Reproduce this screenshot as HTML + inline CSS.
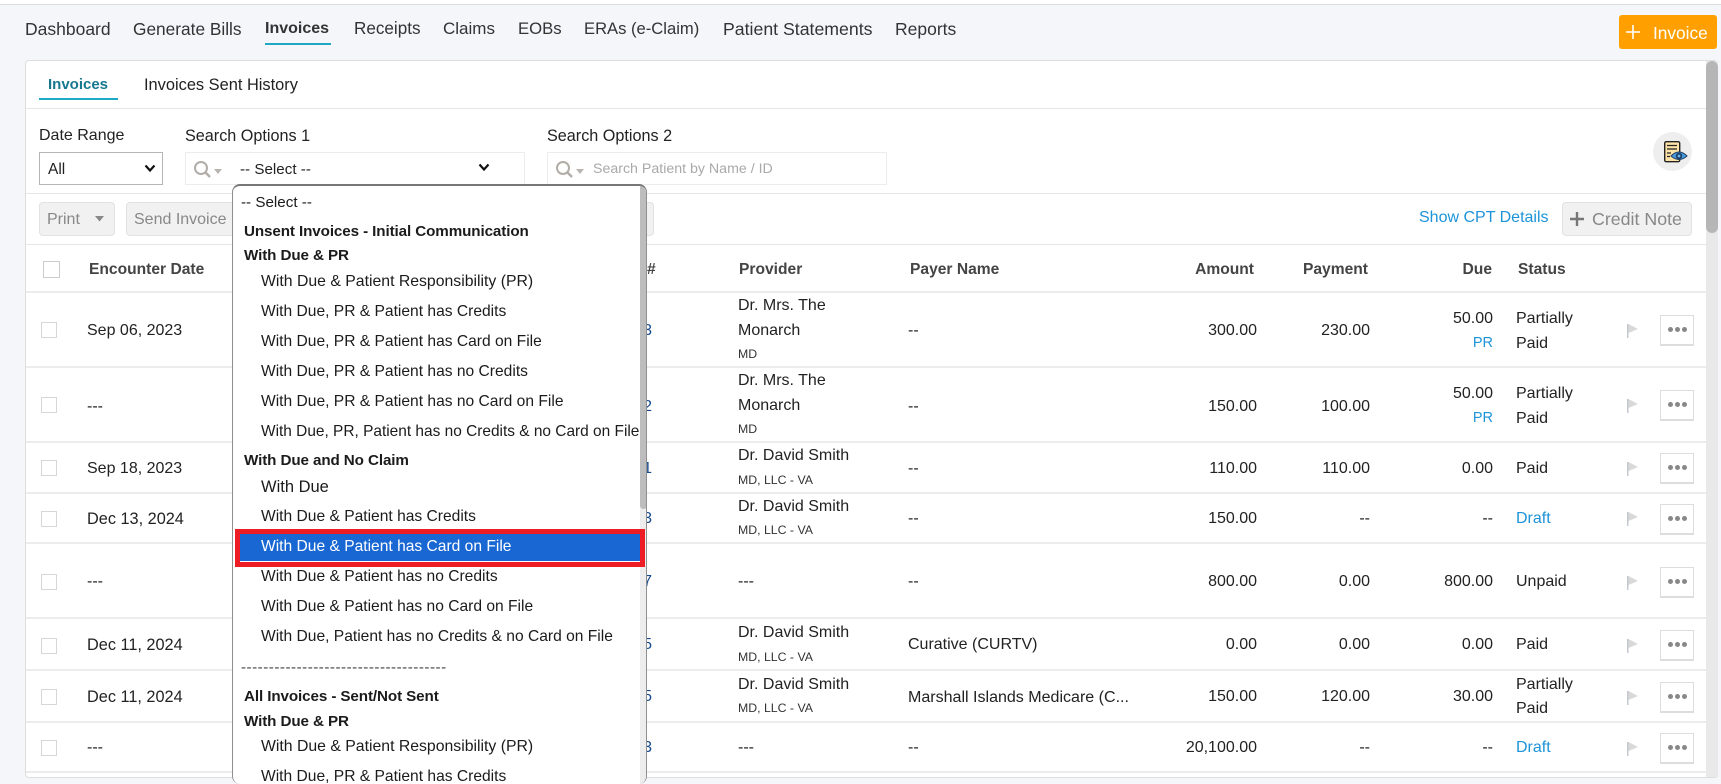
<!DOCTYPE html>
<html lang="en"><head><meta charset="utf-8"><title>Invoices</title>
<style>
html,body{margin:0;padding:0;width:1721px;height:784px;overflow:hidden}
body{position:relative;background:#f4f6fa;font-family:"Liberation Sans",sans-serif;font-size:16px;color:#222}
#p{position:absolute;left:0;top:0;width:1721px;height:784px;overflow:hidden}
.a,.t,.r{position:absolute}
.t,.r{white-space:nowrap;line-height:22px}
.l{position:absolute;left:26px;width:1680px;height:2px;background:#ececec}
.n{color:#333;top:18px}
.h{font-size:15.6px;font-weight:bold;color:#444;top:259px}
.c{position:absolute;left:41px;width:14px;height:14px;border:1px solid #d6d6d6;background:#fff}
.m{position:absolute;left:1660px;width:32px;height:28px;border:1px solid #ddd;border-bottom:2px solid #ddd;background:#fff}
.m:after{content:"";position:absolute;left:7px;top:11px;width:5px;height:5px;border-radius:50%;background:#888;box-shadow:7px 0 0 #888,14px 0 0 #888}
.f{position:absolute;left:1627px;width:11px;height:14px}
.s{font-size:12.3px;color:#333}
.q{font-size:16px}
.b{color:#1d93d8}
.d{position:absolute;left:232px;top:184px;width:415px;height:600px;background:#fff;border:1px solid #8f8f8f;border-top:2px solid #777;border-bottom:0;border-radius:8px;overflow:hidden;box-sizing:border-box}
.o{font-size:15.6px;left:28px;color:#1b1b1b}
.g{font-size:15.2px;font-weight:bold;left:11px;color:#1b1b1b;letter-spacing:-.1px}
.i{font-size:16px;color:#164a8c;right:1069px}
.btn{position:absolute;background:#f1f1f1;border:1px solid #e2e2e2;border-radius:4px;box-sizing:border-box}
</style></head><body>
<div id="p">
<div class="a" style="left:0;top:0;width:1721px;height:4px;background:#fff;border-bottom:1px solid #dcdcdc"></div>

<span class="t n" style="left:25px;font-size:17.5px">Dashboard</span>
<span class="t n" style="left:133px;font-size:17.3px">Generate Bills</span>
<span class="t n" style="left:265px;font-weight:bold;font-size:16px">Invoices</span>
<span class="t n" style="left:354px;font-size:17.1px">Receipts</span>
<span class="t n" style="left:443px;font-size:17px">Claims</span>
<span class="t n" style="left:518px;font-size:16.7px">EOBs</span>
<span class="t n" style="left:584px;font-size:16.6px">ERAs (e-Claim)</span>
<span class="t n" style="left:723px;font-size:17.7px">Patient Statements</span>
<span class="t n" style="left:895px;font-size:17.5px">Reports</span>
<div class="a" style="left:265px;top:43px;width:66px;height:2px;background:#1fa8c4"></div>

<div class="a" style="left:1619px;top:15px;width:98px;height:34px;background:#ff9f00;border-radius:3px"></div>
<svg class="a" style="left:1625px;top:24px" width="16" height="16"><path d="M8 1v14M1 8h14" stroke="#fff" stroke-width="1.6"/></svg>
<span class="t" style="left:1653px;top:22px;color:#fff;font-size:17.3px">Invoice</span>

<div class="a" style="left:25px;top:60px;width:1693px;height:718px;background:#fff;border:1px solid #dedede;border-radius:4px;box-sizing:border-box"></div>
<div class="a" style="left:1706px;top:61px;width:12px;height:716px;background:#e9e9e9"></div>
<div class="a" style="left:1706px;top:61px;width:12px;height:172px;background:#b6b6b6;border-radius:6px"></div>

<span class="t" style="left:48px;top:74px;color:#17788f;font-weight:bold;font-size:15px">Invoices</span>
<span class="t" style="left:144px;top:74px;font-size:16.4px;color:#222">Invoices Sent History</span>
<div class="a" style="left:39px;top:98px;width:79px;height:2px;background:#1fa8c4"></div>
<div class="a" style="left:26px;top:108px;width:1680px;height:1px;background:#e6e6e6"></div>

<span class="t" style="left:39px;top:125px;font-size:16px">Date Range</span>
<span class="t" style="left:185px;top:125px;font-size:16.2px">Search Options 1</span>
<span class="t" style="left:547px;top:125px;font-size:16.2px">Search Options 2</span>

<div class="a" style="left:39px;top:152px;width:124px;height:33px;border:1px solid #b5b5b5;box-sizing:border-box;background:#fff"></div>
<span class="t" style="left:48px;top:159px;font-size:15.5px">All</span>
<svg class="a" style="left:144px;top:164px" width="12" height="9"><path d="M1.5 1.5L6 6.5l4.5-5" fill="none" stroke="#111" stroke-width="2.2"/></svg>

<div class="a" style="left:185px;top:152px;width:340px;height:33px;border:1px solid #ececec;box-sizing:border-box;background:#fff"></div>
<svg class="a" style="left:193px;top:160px" width="30" height="18"><circle cx="8" cy="8" r="6" fill="none" stroke="#b3ada8" stroke-width="2"/><path d="M12 12l5 5" stroke="#b3ada8" stroke-width="2.4"/><path d="M21 9h8l-4 5z" fill="#b8b4b0"/></svg>
<span class="t" style="left:240px;top:159px;font-size:15.2px">-- Select --</span>
<svg class="a" style="left:478px;top:163px" width="12" height="9"><path d="M1.5 1.5L6 6.5l4.5-5" fill="none" stroke="#111" stroke-width="2.2"/></svg>

<div class="a" style="left:547px;top:152px;width:340px;height:33px;border:1px solid #ececec;box-sizing:border-box;background:#fff"></div>
<svg class="a" style="left:555px;top:160px" width="30" height="18"><circle cx="8" cy="8" r="6" fill="none" stroke="#b3ada8" stroke-width="2"/><path d="M12 12l5 5" stroke="#b3ada8" stroke-width="2.4"/><path d="M21 9h8l-4 5z" fill="#b8b4b0"/></svg>
<span class="t" style="left:593px;top:158px;font-size:14.2px;color:#a9a9a9">Search Patient by Name / ID</span>

<div class="a" style="left:1653px;top:132px;width:39px;height:39px;border-radius:50%;background:#eeeeee"></div>
<svg class="a" style="left:1662px;top:140px" width="27" height="24"><rect x="2.700" y="1.700" width="15" height="20" rx="1.5" fill="#fde3a7" stroke="#222" stroke-width="1.4"/><path d="M5 5.500h10M5 9h10M5 13h4M5 16.500h3" stroke="#222" stroke-width="1.200"/><path d="M9 16q8-8 16 0q-8 7-16 0z" fill="#4a9be0" stroke="#1d3f66" stroke-width="1"/><circle cx="17" cy="16" r="3.200" fill="#1d3f66"/><circle cx="17" cy="16" r="1.400" fill="#6db6f0"/></svg>

<div class="a" style="left:26px;top:193px;width:1680px;height:1px;background:#e6e6e6"></div>
<div class="btn" style="left:39px;top:202px;width:76px;height:34px"></div>
<span class="t" style="left:47px;top:209px;font-size:16px;color:#888">Print</span>
<svg class="a" style="left:94px;top:216px" width="11" height="6"><path d="M1 0h9L5.500 5.500z" fill="#888"/></svg>
<div class="btn" style="left:126px;top:202px;width:528px;height:34px"></div>
<span class="t" style="left:134px;top:209px;font-size:16px;color:#888">Send Invoice</span>
<span class="t b" style="left:1419px;top:207px;font-size:16px">Show CPT Details</span>
<div class="btn" style="left:1562px;top:202px;width:130px;height:34px"></div>
<svg class="a" style="left:1570px;top:212px" width="14" height="14"><path d="M7 0v14M0 7h14" stroke="#777" stroke-width="2.4"/></svg>
<span class="t" style="left:1592px;top:208px;font-size:17.8px;color:#888">Credit Note</span>
<div class="a" style="left:26px;top:244px;width:1680px;height:1px;background:#e6e6e6"></div>

<div class="a" style="left:43px;top:261px;width:15px;height:15px;border:1px solid #ccc"></div>
<span class="t h" style="left:89px">Encounter Date</span>
<span class="t h" style="left:647px">#</span>
<span class="t h" style="left:739px">Provider</span>
<span class="t h" style="left:910px">Payer Name</span>
<span class="r h" style="right:467px">Amount</span>
<span class="r h" style="right:353px">Payment</span>
<span class="r h" style="right:229px">Due</span>
<span class="t h" style="left:1518px">Status</span>

<div class="l" style="top:291px"></div><div class="l" style="top:366px"></div><div class="l" style="top:441px"></div><div class="l" style="top:492px"></div><div class="l" style="top:542px"></div><div class="l" style="top:617px"></div><div class="l" style="top:669px"></div><div class="l" style="top:721px"></div><div class="l" style="top:771px"></div>

<!-- row 1 -->
<div class="c" style="top:322px"></div><span class="t" style="left:87px;top:320px">Sep 06, 2023</span><span class="r i" style="top:320px">3</span>
<span class="t q" style="left:738px;top:295px">Dr. Mrs. The</span><span class="t q" style="left:738px;top:320px">Monarch</span><span class="t s" style="left:738px;top:343px">MD</span>
<span class="t" style="left:908px;top:320px">--</span><span class="r" style="right:464px;top:320px">300.00</span><span class="r" style="right:351px;top:320px">230.00</span><span class="r" style="right:228px;top:308px">50.00</span><span class="r b" style="right:228px;top:332px;font-size:14.5px">PR</span>
<span class="t" style="left:1516px;top:308px">Partially</span><span class="t" style="left:1516px;top:333px">Paid</span>
<svg class="f" style="top:324px"><path d="M.75 0v14" stroke="#c4c8cf" stroke-width="1.5"/><path d="M1.500 0L11 5 1.500 9z" fill="#d9d9d9"/></svg><div class="m" style="top:315px"></div>

<!-- row 2 -->
<div class="c" style="top:397px"></div><span class="t" style="left:87px;top:396px">---</span><span class="r i" style="top:396px">2</span>
<span class="t q" style="left:738px;top:370px">Dr. Mrs. The</span><span class="t q" style="left:738px;top:395px">Monarch</span><span class="t s" style="left:738px;top:418px">MD</span>
<span class="t" style="left:908px;top:396px">--</span><span class="r" style="right:464px;top:396px">150.00</span><span class="r" style="right:351px;top:396px">100.00</span><span class="r" style="right:228px;top:383px">50.00</span><span class="r b" style="right:228px;top:407px;font-size:14.5px">PR</span>
<span class="t" style="left:1516px;top:383px">Partially</span><span class="t" style="left:1516px;top:408px">Paid</span>
<svg class="f" style="top:399px"><path d="M.75 0v14" stroke="#c4c8cf" stroke-width="1.5"/><path d="M1.500 0L11 5 1.500 9z" fill="#d9d9d9"/></svg><div class="m" style="top:390px"></div>

<!-- row 3 -->
<div class="c" style="top:460px"></div><span class="t" style="left:87px;top:458px">Sep 18, 2023</span><span class="r i" style="top:458px">1</span>
<span class="t q" style="left:738px;top:445px">Dr. David Smith</span><span class="t s" style="left:738px;top:469px">MD, LLC - VA</span>
<span class="t" style="left:908px;top:458px">--</span><span class="r" style="right:464px;top:458px">110.00</span><span class="r" style="right:351px;top:458px">110.00</span><span class="r" style="right:228px;top:458px">0.00</span>
<span class="t" style="left:1516px;top:458px">Paid</span>
<svg class="f" style="top:462px"><path d="M.75 0v14" stroke="#c4c8cf" stroke-width="1.5"/><path d="M1.500 0L11 5 1.500 9z" fill="#d9d9d9"/></svg><div class="m" style="top:453px"></div>

<!-- row 4 -->
<div class="c" style="top:511px"></div><span class="t" style="left:87px;top:508px;font-size:16.3px">Dec 13, 2024</span><span class="r i" style="top:508px">3</span>
<span class="t q" style="left:738px;top:496px">Dr. David Smith</span><span class="t s" style="left:738px;top:519px">MD, LLC - VA</span>
<span class="t" style="left:908px;top:508px">--</span><span class="r" style="right:464px;top:508px">150.00</span><span class="r" style="right:351px;top:508px">--</span><span class="r" style="right:228px;top:508px">--</span>
<span class="t b" style="left:1516px;top:508px">Draft</span>
<svg class="f" style="top:512px"><path d="M.75 0v14" stroke="#c4c8cf" stroke-width="1.5"/><path d="M1.500 0L11 5 1.500 9z" fill="#d9d9d9"/></svg><div class="m" style="top:504px"></div>

<!-- row 5 -->
<div class="c" style="top:574px"></div><span class="t" style="left:87px;top:571px">---</span><span class="r i" style="top:571px">7</span>
<span class="t" style="left:738px;top:571px">---</span>
<span class="t" style="left:908px;top:571px">--</span><span class="r" style="right:464px;top:571px">800.00</span><span class="r" style="right:351px;top:571px">0.00</span><span class="r" style="right:228px;top:571px">800.00</span>
<span class="t" style="left:1516px;top:571px">Unpaid</span>
<svg class="f" style="top:576px"><path d="M.75 0v14" stroke="#c4c8cf" stroke-width="1.5"/><path d="M1.500 0L11 5 1.500 9z" fill="#d9d9d9"/></svg><div class="m" style="top:567px"></div>

<!-- row 6 -->
<div class="c" style="top:638px"></div><span class="t" style="left:87px;top:634px;font-size:16.3px">Dec 11, 2024</span><span class="r i" style="top:634px">5</span>
<span class="t q" style="left:738px;top:622px">Dr. David Smith</span><span class="t s" style="left:738px;top:646px">MD, LLC - VA</span>
<span class="t" style="left:908px;top:634px">Curative (CURTV)</span><span class="r" style="right:464px;top:634px">0.00</span><span class="r" style="right:351px;top:634px">0.00</span><span class="r" style="right:228px;top:634px">0.00</span>
<span class="t" style="left:1516px;top:634px">Paid</span>
<svg class="f" style="top:639px"><path d="M.75 0v14" stroke="#c4c8cf" stroke-width="1.5"/><path d="M1.500 0L11 5 1.500 9z" fill="#d9d9d9"/></svg><div class="m" style="top:630px"></div>

<!-- row 7 -->
<div class="c" style="top:689px"></div><span class="t" style="left:87px;top:686px;font-size:16.3px">Dec 11, 2024</span><span class="r i" style="top:686px">5</span>
<span class="t q" style="left:738px;top:674px">Dr. David Smith</span><span class="t s" style="left:738px;top:697px">MD, LLC - VA</span>
<span class="t q" style="left:908px;top:686px;font-size:16.05px">Marshall Islands Medicare (C...</span><span class="r" style="right:464px;top:686px">150.00</span><span class="r" style="right:351px;top:686px">120.00</span><span class="r" style="right:228px;top:686px">30.00</span>
<span class="t" style="left:1516px;top:674px">Partially</span><span class="t" style="left:1516px;top:698px">Paid</span>
<svg class="f" style="top:691px"><path d="M.75 0v14" stroke="#c4c8cf" stroke-width="1.5"/><path d="M1.500 0L11 5 1.500 9z" fill="#d9d9d9"/></svg><div class="m" style="top:682px"></div>

<!-- row 8 -->
<div class="c" style="top:740px"></div><span class="t" style="left:87px;top:737px">---</span><span class="r i" style="top:737px">3</span>
<span class="t" style="left:738px;top:737px">---</span>
<span class="t" style="left:908px;top:737px">--</span><span class="r" style="right:464px;top:737px">20,100.00</span><span class="r" style="right:351px;top:737px">--</span><span class="r" style="right:228px;top:737px">--</span>
<span class="t b" style="left:1516px;top:737px">Draft</span>
<svg class="f" style="top:742px"><path d="M.75 0v14" stroke="#c4c8cf" stroke-width="1.5"/><path d="M1.500 0L11 5 1.500 9z" fill="#d9d9d9"/></svg><div class="m" style="top:733px"></div>

<!-- dropdown -->
<div class="d">
<div class="a" style="left:407px;top:0;width:7px;height:600px;background:#ededed"></div>
<div class="a" style="left:407px;top:0;width:7px;height:323px;background:#bdbdbd;border-radius:0 0 4px 4px"></div>
<span class="t" style="left:8px;top:6px;font-size:15.2px;color:#1b1b1b">-- Select --</span>
<span class="t g" style="top:35px">Unsent Invoices - Initial Communication</span>
<span class="t g" style="top:59px">With Due &amp; PR</span>
<span class="t o" style="top:85px;font-size:15.8px">With Due &amp; Patient Responsibility (PR)</span>
<span class="t o" style="top:115px">With Due, PR &amp; Patient has Credits</span>
<span class="t o" style="top:145px">With Due, PR &amp; Patient has Card on File</span>
<span class="t o" style="top:175px">With Due, PR &amp; Patient has no Credits</span>
<span class="t o" style="top:205px">With Due, PR &amp; Patient has no Card on File</span>
<span class="t o" style="top:235px;font-size:15.45px">With Due, PR, Patient has no Credits &amp; no Card on File</span>
<span class="t g" style="top:264px">With Due and No Claim</span>
<span class="t o" style="top:290px;font-size:16.5px">With Due</span>
<span class="t o" style="top:320px">With Due &amp; Patient has Credits</span>
<div class="a" style="left:2px;top:343px;width:400px;height:28px;background:#1967d2;border:5px solid #ee1c25;box-shadow:inset 0 -1px 0 #fff"></div>
<span class="t o" style="top:350px;color:#fff">With Due &amp; Patient has Card on File</span>
<span class="t o" style="top:380px">With Due &amp; Patient has no Credits</span>
<span class="t o" style="top:410px">With Due &amp; Patient has no Card on File</span>
<span class="t o" style="top:440px">With Due, Patient has no Credits &amp; no Card on File</span>
<span class="t" style="left:8px;top:471px;font-size:15.2px;color:#444;letter-spacing:.5px">-------------------------------------</span>
<span class="t g" style="top:500px">All Invoices - Sent/Not Sent</span>
<span class="t g" style="top:525px">With Due &amp; PR</span>
<span class="t o" style="top:550px;font-size:15.8px">With Due &amp; Patient Responsibility (PR)</span>
<span class="t o" style="top:580px">With Due, PR &amp; Patient has Credits</span>
</div>
</div>
</body></html>
